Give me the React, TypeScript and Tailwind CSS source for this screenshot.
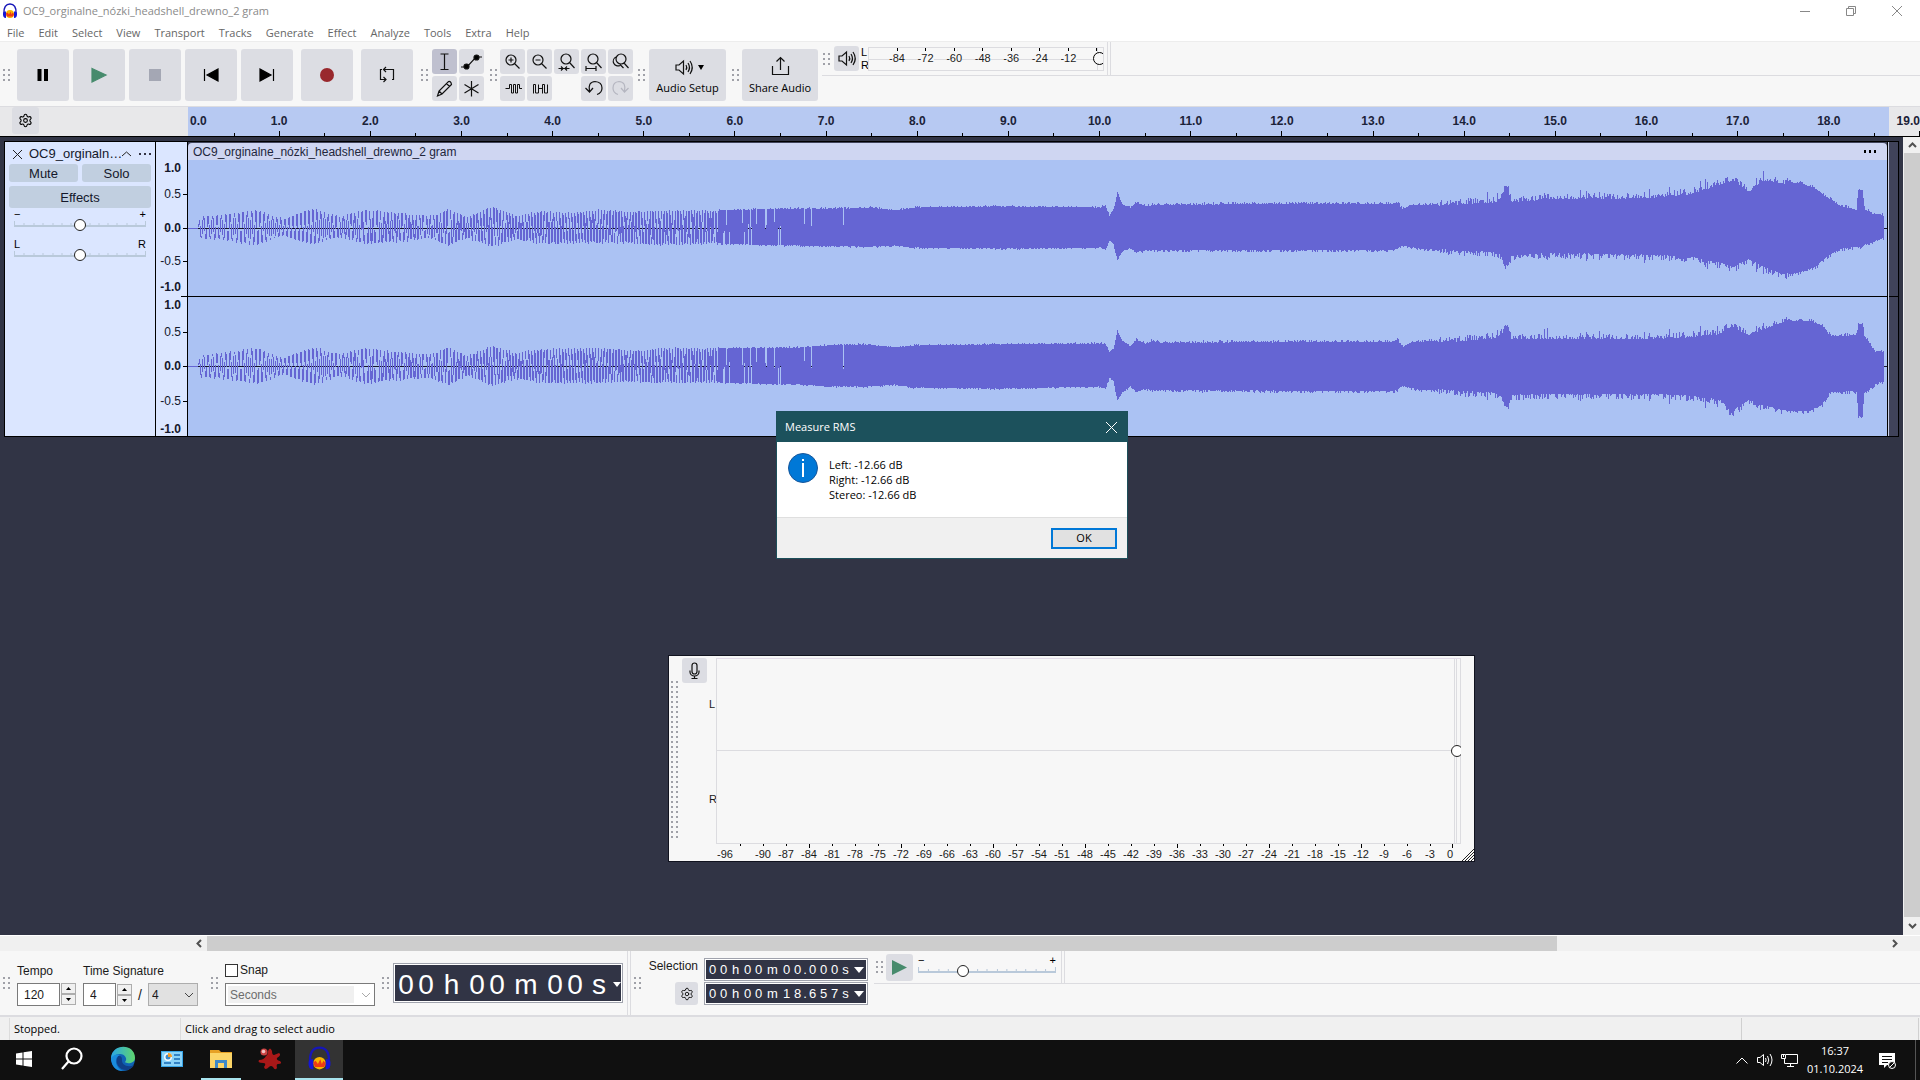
import type { ComponentProps, ReactNode } from "react";
import clsx from "clsx";
import { Settings } from "lucide-react";

const TITLE = "OC9_orginalne_nózki_headshell_drewno_2 gram";

const MENUS = [
  "File", "Edit", "Select", "View", "Transport", "Tracks",
  "Generate", "Effect", "Analyze", "Tools", "Extra", "Help",
];

/** x, top and bottom of the envelope, in pixels of the clip */
type Point = [number, number, number];

const LEFT_CHANNEL: Point[] = [
  [0, 68, 68], [9, 68, 68], [12, 56, 79], [32, 55, 80], [69, 50, 85], [95, 59, 76],
  [125, 48, 85], [150, 57, 77], [177, 50, 84], [212, 53, 82], [242, 56, 78],
  [260, 49, 86], [279, 57, 78], [304, 46, 87], [328, 56, 79], [352, 51, 84],
  [377, 53, 83], [409, 50, 83], [442, 52, 83], [460, 51, 85], [532, 50, 84],
  [562, 49, 85], [612, 48, 86], [667, 48, 87], [682, 47, 87], [707, 50, 86],
  [727, 47, 88], [812, 46, 89], [912, 47, 88], [917, 45, 90], [921, 55, 81],
  [925, 50, 84], [929, 33, 100], [934, 44, 92], [942, 47, 88], [948, 42, 93],
  [957, 45, 91], [972, 44, 91], [1112, 43, 91], [1202, 43, 91], [1209, 42, 90],
  [1214, 48, 86], [1222, 45, 88], [1272, 42, 93], [1307, 40, 94], [1314, 35, 98],
  [1316, 25, 106], [1320, 26, 106], [1322, 40, 98], [1362, 37, 95], [1462, 36, 97],
  [1502, 32, 99], [1532, 23, 105], [1545, 18, 109], [1560, 30, 101], [1572, 20, 107],
  [1582, 19, 112], [1594, 21, 116], [1612, 22, 113], [1627, 28, 108], [1638, 36, 98],
  [1652, 45, 90], [1668, 49, 88], [1670, 29, 88], [1674, 29, 88], [1676, 48, 86],
  [1684, 53, 83], [1695, 55, 79],
];

const RIGHT_CHANNEL: Point[] = [
  [0, 69, 69], [9, 69, 69], [12, 58, 80], [32, 56, 82], [69, 51, 87], [95, 61, 77],
  [125, 50, 88], [150, 57, 79], [177, 51, 87], [212, 55, 83], [242, 57, 81],
  [260, 50, 88], [279, 59, 79], [304, 49, 89], [328, 56, 82], [352, 52, 86],
  [409, 51, 86], [452, 54, 85], [467, 51, 86], [532, 51, 86], [612, 50, 88],
  [639, 48, 90], [677, 47, 90], [707, 50, 88], [727, 48, 91], [812, 47, 92],
  [912, 46, 90], [917, 46, 92], [921, 55, 81], [925, 52, 84], [929, 34, 104],
  [934, 43, 96], [942, 49, 90], [948, 42, 95], [957, 46, 93], [964, 43, 94],
  [972, 45, 94], [1202, 44, 95], [1209, 42, 94], [1214, 49, 89], [1227, 44, 93],
  [1272, 42, 96], [1307, 39, 98], [1314, 34, 103], [1316, 28, 111], [1320, 28, 110],
  [1322, 40, 100], [1362, 40, 99], [1462, 40, 99], [1502, 38, 101], [1532, 35, 105],
  [1543, 27, 117], [1560, 36, 105], [1577, 30, 111], [1594, 23, 115], [1622, 23, 115],
  [1634, 28, 108], [1642, 38, 96], [1668, 37, 95], [1670, 26, 120], [1674, 26, 120],
  [1676, 38, 97], [1687, 54, 88], [1695, 54, 85],
];

function noise(n: number) {
  const s = Math.sin(n * 127.1) * 43758.5453;
  return s - Math.floor(s);
}

/** cycles of the rising sweep that have passed at a column */
function sweep(x: number) {
  const t = Math.max(0, x - 10);
  return 0.22 * t + 0.00015 * t * t;
}

/** one filled bar for each column of the clip */
function wavePath(points: Point[], mid: number, seed: number) {
  let path = "";
  let segment = 0;
  for (let x = 10; x < 1696; x++) {
    while (segment < points.length - 2 && points[segment + 1]![0] <= x) segment++;
    const [x0, top0, bottom0] = points[segment]!;
    const [x1, top1, bottom1] = points[segment + 1]!;
    const t = Math.min(1, (x - x0) / (x1 - x0));
    let top = top0 + (top1 - top0) * t;
    let bottom = bottom0 + (bottom1 - bottom0) * t;

    const rough = x < 950 ? 1.5 : x < 1250 ? 2.5 : x < 1600 ? 6 : 3;
    const a = noise(x + seed);
    const b = noise(x * 3 + seed);
    const spike = x > 1290 && x < 1590 && noise(x * 7) > 0.94 ? 6 : 0;
    top += (a * a - 0.4) * -rough - spike;
    bottom += (b * b - 0.4) * rough + spike * 0.7;

    if (x < 530) {
      /** narrow bars at the low end of the sweep */
      const jitter = x > 150 ? noise(x * 5) * 0.14 : 0;
      let high = -1;
      let low = 1;
      for (let i = 1; i <= 8; i++) {
        const v = Math.sin(2 * Math.PI * (sweep(x + i / 8) + jitter));
        high = Math.max(high, v);
        low = Math.min(low, v);
      }
      top = mid - (mid - top) * high;
      bottom = mid - (bottom - mid) * low;
    } else if (x < 665) {
      /** slits that thin out until the wave is solid */
      const slit = noise(x * 11) < 0.5 * (1 - (x - 530) / 150);
      if (slit && x % 3 !== 0) {
        if (noise(x * 13) > 0.4) top = mid - 6 + 10 * a;
        else bottom = mid + 6 - 10 * b;
      }
    }

    const y0 = Math.round(top);
    const y1 = Math.max(Math.round(bottom), y0 + 1);
    path += `M${x} ${y0}h1V${y1}h-1Z`;
  }
  return path;
}

const leftPath = wavePath(LEFT_CHANNEL, 68, 1);
const rightPath = wavePath(RIGHT_CHANNEL, 69, 2);

function Wave({ path, mid, height, className }: { path: string; mid: number; height: number; className: string }) {
  return (
    <svg
      viewBox={`0 0 1699 ${height}`}
      preserveAspectRatio="none"
      shapeRendering="crispEdges"
      className={clsx("block w-full bg-[#abc2f3]", className)}
    >
      <path d={`M10 ${mid + 0.5}H1700`} stroke="#15162b" />
      <path d={`M0 ${mid + 0.5}H10`} stroke="#6565d3" />
      <path d={path} fill="#6565d3" />
    </svg>
  );
}

function Grip({ rows = 3, className = "" }: { rows?: number; className?: string }) {
  return (
    <svg width="7" height={rows * 5 - 3} className={clsx("shrink-0", className)} fill="#a0a1a8">
      {Array.from({ length: rows }, (_, row) => (
        <g key={row}>
          <rect x="0" y={row * 5} width="2" height="2" />
          <rect x="5" y={row * 5} width="2" height="2" />
        </g>
      ))}
    </svg>
  );
}

function ToolButton({ className = "", ...props }: ComponentProps<"button">) {
  return (
    <button
      className={clsx("flex shrink-0 items-center justify-center rounded-[3px]", className)}
      {...props}
    />
  );
}

function Icon({ size = 25, children, className = "" }: { size?: number; children: ReactNode; className?: string }) {
  return (
    <svg
      width={size}
      height={size}
      viewBox={`0 0 ${size} ${size}`}
      fill="none"
      stroke="#111"
      strokeWidth="1.2"
      className={clsx("shrink-0", className)}
    >
      {children}
    </svg>
  );
}

function SpeakerIcon() {
  return (
    <Icon>
      <path d="M5 10H8L12.500 6V19L8 15H5Z" />
      <path d="M15 10Q16.500 12.500 15 15M17 8Q20 12.500 17 17M19 6Q23.500 12.500 19 19" />
    </Icon>
  );
}

const TRANSPORT = [
  { label: "Pause", icon: <path d="M20.500 20H24.500V32H20.500ZM27 20H31V32H27Z" fill="#000" stroke="none" /> },
  { label: "Play", icon: <path d="M19 19.500 33 26 19 33Z" fill="#478b6d" stroke="#478b6d" /> },
  { label: "Stop", icon: <path d="M20 20H32V32H20Z" fill="#a4a7b4" stroke="none" /> },
  { label: "Skip to Start", icon: <path d="M19.500 20V32M33 20 22 26 33 32Z" fill="#000" stroke="#000" /> },
  { label: "Skip to End", icon: <path d="M32.500 20V32M19 20 30 26 19 32Z" fill="#000" stroke="#000" /> },
];

const TOOLS = [
  {
    label: "Selection Tool",
    icon: <path d="M8.500 5H16.500M8.500 20.500H16.500M12.500 5V20.500" />,
  },
  {
    label: "Envelope Tool",
    icon: (
      <>
        <path d="M2 18H8L17 8H23" />
        <circle cx="7.500" cy="17.500" r="2.500" fill="#000" />
        <circle cx="17.500" cy="8.500" r="2.500" fill="#000" />
      </>
    ),
  },
  {
    label: "Draw Tool",
    icon: <path d="M5.500 20 7 15 16.500 5.500Q19 5 19.500 8.500L10 18ZM7 15 10 18M14.500 7.500 17.500 10.500" />,
  },
  {
    label: "Multi-Tool",
    icon: <path d="M12.500 5V20.500M5.500 8.500 19.500 17M19.500 8.500 5.500 17" />,
  },
];

const EDITING = [
  {
    label: "Zoom In",
    icon: <path d="M16 11A5 5 0 1 1 6 11A5 5 0 1 1 16 11M14.500 14.500 19.500 19.500M11 8.500V13.500M8.500 11H13.500" />,
  },
  {
    label: "Zoom Out",
    icon: <path d="M16 11A5 5 0 1 1 6 11A5 5 0 1 1 16 11M14.500 14.500 19.500 19.500M8.500 11H13.500" />,
  },
  {
    label: "Fit Selection",
    icon: (
      <path d="M17 10A5 5 0 1 1 7 10A5 5 0 1 1 17 10M15.500 13.500 20.500 19M4.500 19.500H15.500M7 17.500 9 19.500 7 21.500M13 17.500 11 19.500 13 21.500" />
    ),
  },
  {
    label: "Fit Project",
    icon: <path d="M17 10A5 5 0 1 1 7 10A5 5 0 1 1 17 10M15.500 13.500 20.500 19M5 19.500H15M5 17V22M15 17V22" />,
  },
  {
    label: "Zoom Toggle",
    icon: <path d="M18 10A5 5 0 1 1 8 10A5 5 0 1 1 18 10M16 14 20.500 19M8 8A4.500 4.500 0 1 0 12 16.500M12 15.500 15.500 19" />,
  },
  {
    label: "Trim Audio",
    icon: (
      <path
        d="M5.500 12.500H9.500V8.500H11.500V17H13.500V8.500H15.500V17H17.500V8.500H19.500V12.500H22"
        strokeWidth="1"
      />
    ),
  },
  {
    label: "Silence Audio",
    icon: <path d="M6.500 17.500V8.500H8.500V17H11.500V8.500M11.500 12.500H15.500M15.500 17.500V8.500H17.500V17H20.500V8.500" strokeWidth="1" />,
  },
  null,
  {
    label: "Undo",
    icon: <path d="M8.500 15.500Q6.500 6 14 5.500Q21 6 21 12Q21 17 16 18.500M4.500 12 8.500 16 12 12" />,
  },
  {
    label: "Redo",
    icon: <path d="M16.500 15.500Q18.500 6 11 5.500Q5 6 5 12Q5 17 10 18.500M20.500 12 16.500 16 13 12" stroke="#b5b6c0" />,
  },
];

function Headphones({ className = "" }: { className?: string }) {
  return (
    <svg viewBox="0 0 32 32" className={className}>
      <ellipse cx="16" cy="22" rx="8" ry="8" fill="#f7b500" />
      <path d="M8 21 11 19 14 23 17 17 19 23 21 19 24 22 22 27H10Z" fill="#ee3a16" />
      <path d="M4 21C3 8 8 2 16 2S29 8 28 21" fill="none" stroke="#1616b8" strokeWidth="3" />
      <path d="M2 20Q3 16 8 17V30Q1 30 2 20ZM30 20Q29 16 24 17V30Q31 30 30 20Z" fill="#1616d8" />
    </svg>
  );
}

function TitleBar() {
  return (
    <header className="bg-white">
      <div className="flex h-[22px] items-center pl-[2px] text-[11px] text-[#8a8a8a]">
        <Headphones className="mr-[5px] size-4" />
        <span className="grow pt-px">{TITLE}</span>
        <button aria-label="Minimize" className="w-[46px]">
          <svg width="10" height="10" className="mx-auto" stroke="#888"><path d="M0 5.500H10" /></svg>
        </button>
        <button aria-label="Restore" className="w-[46px]">
          <svg width="10" height="10" className="mx-auto" stroke="#888" fill="none">
            <path d="M.5 2.500H7.500V9.500H.5ZM2.500 2.500V.5H9.500V7.500H7.500" />
          </svg>
        </button>
        <button aria-label="Close" className="w-[46px]">
          <svg width="10" height="10" className="mx-auto" stroke="#888"><path d="M0 0 10 10M10 0 0 10" /></svg>
        </button>
      </div>
      <nav className="flex h-5 items-end gap-[14px] border-b border-[#ededed] pl-[7px] text-[11px] leading-[17px] text-[#666]">
        {MENUS.map((menu) => (
          <button key={menu}>{menu}</button>
        ))}
      </nav>
    </header>
  );
}

function PlaybackMeter() {
  const marks = ["-84", "-72", "-60", "-48", "-36", "-24", "-12", "0"];
  return (
    <div className="relative flex h-6 w-[236px] overflow-hidden border border-[#dcdce0] text-[11px] leading-[14px] text-[#222]">
      <div className="absolute inset-x-0 top-[11px] h-px bg-[#dcdce0]" />
      <div className="relative mr-[6px] ml-7 flex grow justify-between">
        {marks.map((mark) => (
          <div key={mark} className="flex w-0 flex-col items-center">
            <span className="h-[3px] w-px shrink-0 bg-black" />
            <span className="bg-[#f7f7f7]">{mark}</span>
          </div>
        ))}
      </div>
      <div className="absolute inset-y-0 right-[5px] w-px bg-[#dcdce0]" />
      <input
        type="range"
        aria-label="Playback level"
        defaultValue={100}
        className="
          absolute top-1 left-0 h-[14px] w-[237px] appearance-none bg-transparent
          [&::-webkit-slider-thumb]:size-[13px] [&::-webkit-slider-thumb]:appearance-none
          [&::-webkit-slider-thumb]:rounded-full [&::-webkit-slider-thumb]:border
          [&::-webkit-slider-thumb]:border-black [&::-webkit-slider-thumb]:bg-[#f7f7f7]
        "
      />
    </div>
  );
}

function Toolbars() {
  return (
    <div className="flex h-[65px] items-stretch border-b border-[#dcdce0] bg-[#f7f7f7]">
      <div className="flex items-center pt-[2px]">
        <Grip className="mr-[7px] ml-[3px]" />
        <div className="flex gap-1">
          {TRANSPORT.map(({ label, icon }) => (
            <ToolButton key={label} aria-label={label} className="size-[52px] bg-[#dcdde3]">
              <Icon size={52}>{icon}</Icon>
            </ToolButton>
          ))}
        </div>
        <ToolButton aria-label="Record" className="ml-2 size-[52px] bg-[#dcdde3]">
          <Icon size={52}><circle cx="26" cy="26" r="7" fill="#99282d" stroke="none" /></Icon>
        </ToolButton>
        <ToolButton aria-label="Loop" className="ml-2 size-[52px] bg-[#dcdde3]">
          <Icon size={52}>
            <path d="M21 20.500H19.500V30.500H25M22.500 20.500H32.500V30.500H31M25 18 22.500 20.500 25 23M22.500 28 25 30.500 22.500 33" />
          </Icon>
        </ToolButton>
        <Grip className="mr-1 ml-2" />
        <div className="grid grid-cols-2 gap-[2px]">
          {TOOLS.map(({ label, icon }, index) => (
            <ToolButton
              key={label}
              aria-label={label}
              className={clsx("size-[25px]", index === 0 ? "bg-[#bfc0cf]" : "bg-[#dcdde3]")}
            >
              <Icon>{icon}</Icon>
            </ToolButton>
          ))}
        </div>
        <Grip className="mr-[3px] ml-[6px]" />
        <div className="grid grid-cols-5 gap-[2px]">
          {EDITING.map((tool, index) =>
            tool ? (
              <ToolButton key={index} aria-label={tool.label} className="size-[25px] bg-[#dcdde3]">
                <Icon>{tool.icon}</Icon>
              </ToolButton>
            ) : (
              <span key={index} />
            ),
          )}
        </div>
        <Grip className="mr-1 ml-[5px]" />
        <ToolButton className="h-[52px] w-[77px] flex-col bg-[#dcdde3] text-[11px] leading-[16px]">
          <span className="flex items-center gap-[2px]">
            <SpeakerIcon />
            <svg width="6" height="6"><path d="M0 1H6L3 6Z" /></svg>
          </span>
          Audio Setup
        </ToolButton>
        <Grip className="mr-[3px] ml-[6px]" />
        <ToolButton className="h-[52px] w-[76px] flex-col bg-[#dcdde3] text-[11px] leading-[16px]">
          <Icon>
            <path d="M4.500 11V19.500H20.500V11M12.500 15V2.500M8.500 6.500 12.500 2.500 16.500 6.500" />
          </Icon>
          Share Audio
        </ToolButton>
      </div>
      <div className="ml-1 grow">
        <div className="flex h-[34px] items-center border-b border-[#dcdce0] font-[Liberation_Sans,sans-serif]">
          <Grip className="mr-1 ml-[1px]" />
          <ToolButton aria-label="Playback meter" className="size-[25px] bg-[#dcdde3]">
            <SpeakerIcon />
          </ToolButton>
          <div className="w-[9px] pl-[2px] text-[11px] leading-[13px]">
            <div>L</div>
            <div>R</div>
          </div>
          <PlaybackMeter />
          <div className="ml-[3px] h-full w-[4px] border-x border-[#dcdce0]" />
        </div>
      </div>
    </div>
  );
}

function Timeline() {
  return (
    <div className="flex h-[30px] border-b border-black bg-[#e8e8ea]">
      <div className="w-[188px] shrink-0 pl-3">
        <ToolButton aria-label="Timeline options" className="h-[27px] w-[27px] bg-[#dcdde3]">
          <Settings size={15} strokeWidth={1.7} />
        </ToolButton>
      </div>
      <div
        className="
          relative flex grow bg-linear-to-r from-[#b7c9f2] from-[98.2%] to-[#e8e8ea] to-[98.2%]
          font-[Liberation_Sans,sans-serif] text-[12px] font-bold text-[#1b2238]
        "
      >
        {Array.from({ length: 19 }, (_, second) => (
          <div key={second} className="flex flex-1 items-end">
            <div className={clsx("flex h-full w-0 flex-col whitespace-nowrap", second ? "items-center" : "items-start pl-[2px]")}>
              <span className="grow pt-[5px]">{second}.0</span>
              {second > 0 && <span className="h-[5px] w-px bg-black" />}
            </div>
            <div className="mx-auto h-[3px] w-px bg-black" />
          </div>
        ))}
        <div className="flex h-full w-0 flex-col items-end whitespace-nowrap">
          <span className="grow pt-[5px]">19.0</span>
          <span className="h-[5px] w-px bg-black" />
        </div>
      </div>
    </div>
  );
}

const SLIDER = `
  h-[14px] appearance-none bg-transparent
  [&::-webkit-slider-thumb]:size-3 [&::-webkit-slider-thumb]:appearance-none
  [&::-webkit-slider-thumb]:rounded-full [&::-webkit-slider-thumb]:border
  [&::-webkit-slider-thumb]:border-[#222] [&::-webkit-slider-thumb]:bg-white
`;

function Slider({ label, value, low, high, className = "" }: { label: string; value: number; low: string; high: string; className?: string }) {
  return (
    <label className={clsx("block font-[Liberation_Sans,sans-serif] text-[11px] text-black", className)}>
      <span className="flex h-2 items-center justify-between leading-[8px]">
        <span>{low}</span>
        <span>{high}</span>
      </span>
      <span className="relative flex h-[14px]">
        <svg className="absolute inset-0" width="100%" height="14" viewBox="0 0 132 14" preserveAspectRatio="none" stroke="#b9c9da">
          <path d="M0 8H132" strokeWidth="2" />
          <path d="M.5 3V7M10 5V7M20 5V7M29 5V7M39 5V7M48 5V7M57 5V7M66 5V7M76 5V7M85 5V7M94 5V7M103 5V7M113 5V7M122 5V7M131.500 3V7" />
        </svg>
        <input type="range" aria-label={label} defaultValue={value} className={clsx(SLIDER, "relative w-full")} />
      </span>
    </label>
  );
}

function TrackPanel() {
  return (
    <div className="w-[151px] shrink-0 border-r border-black bg-[#dbe6ff] px-1 pt-[2px] font-[Liberation_Sans,sans-serif] text-[13px] text-[#14182b]">
      <div className="flex h-5 items-center">
        <button aria-label="Close track" className="mr-[7px] ml-1">
          <svg width="9" height="9" stroke="#222"><path d="M0 0 9 9M9 0 0 9" /></svg>
        </button>
        <span className="grow">OC9_orginaln…</span>
        <button aria-label="Collapse" className="mr-2">
          <svg width="9" height="6" stroke="#222" fill="none"><path d="M0 5 4.500 1 9 5" /></svg>
        </button>
        <button aria-label="Track menu" className="mr-1">
          <svg width="12" height="2" fill="#334"><path d="M0 0H2V2H0ZM5 0H7V2H5ZM10 0H12V2H10Z" /></svg>
        </button>
      </div>
      <div className="flex gap-1">
        <ToolButton className="h-[18px] flex-1 bg-[#c1cfe0] pt-px">Mute</ToolButton>
        <ToolButton className="h-[18px] flex-1 bg-[#c1cfe0] pt-px">Solo</ToolButton>
      </div>
      <ToolButton className="mt-1 h-[22px] w-full bg-[#c1cfe0] pt-px">Effects</ToolButton>
      <Slider label="Gain" value={50} low="−" high="+" className="mt-[2px] px-[5px]" />
      <Slider label="Pan" value={50} low="L" high="R" className="mt-2 px-[5px]" />
    </div>
  );
}

function ScaleMark({ value, className }: { value: string; className: string }) {
  const bold = value !== "0.5" && value !== "-0.5";
  return (
    <div className={clsx("flex items-center justify-end gap-[2px]", bold && "font-bold", className)}>
      {value}
      <span className={clsx("h-px w-1", !value.endsWith("1.0") && "bg-black")} />
    </div>
  );
}

function AmplitudeScale() {
  return (
    <div className="w-8 shrink-0 border-r border-black bg-[#dbe6ff] pt-[18px] font-[Liberation_Sans,sans-serif] text-[12px] leading-[14px] text-[#14182b]">
      <ScaleMark value="1.0" className="h-4" />
      <ScaleMark value="0.5" className="h-9" />
      <ScaleMark value="0.0" className="h-8" />
      <ScaleMark value="-0.5" className="h-[34px]" />
      <ScaleMark value="-1.0" className="h-[18px]" />
      <div className="ml-auto h-px w-[6px] bg-black" />
      <ScaleMark value="1.0" className="h-4" />
      <ScaleMark value="0.5" className="h-[38px]" />
      <ScaleMark value="0.0" className="h-[30px]" />
      <ScaleMark value="-0.5" className="h-10" />
      <ScaleMark value="-1.0" className="h-[15px]" />
    </div>
  );
}

function Track() {
  return (
    <div className="mt-1 mr-1 ml-1 flex border border-black bg-[#40435a]">
      <TrackPanel />
      <AmplitudeScale />
      <div className="grow border-r border-black pt-px">
        <div className="flex h-[17px] items-center justify-between rounded-t-[4px] bg-[#cfd6f2] px-[5px] font-[Liberation_Sans,sans-serif] text-[12px] text-[#22263c]">
          <span>{TITLE}</span>
          <button aria-label="Clip menu" className="mr-1">
            <svg width="16" height="3"><path d="M2 0H4V3H2ZM7 0H9V3H7ZM12 0H14V3H12Z" /></svg>
          </button>
        </div>
        <Wave path={leftPath} mid={68} height={136} className="h-[136px]" />
        <div className="h-px bg-black" />
        <Wave path={rightPath} mid={69} height={139} className="h-[139px]" />
      </div>
      <div className="flex w-[10px] shrink-0 flex-col border-l border-[#c9cfe6]">
        <div className="h-[155px] border-b border-black" />
      </div>
    </div>
  );
}

function RecordMeter() {
  return (
    <section className="absolute top-[518px] left-[668px] flex h-[207px] w-[807px] border border-[#11131f] bg-[#f7f7f7] font-[Liberation_Sans,sans-serif] text-[11px] text-[#1a1a1a]">
      <Grip rows={32} className="mt-[25px] mr-[4px] ml-[2px]" />
      <ToolButton aria-label="Record meter" className="mt-[2px] size-[25px] bg-[#dcdde3]">
        <Icon>
          <path d="M10 7.500A2.500 2.500 0 0 1 15 7.500V13.500A2.500 2.500 0 0 1 10 13.500ZM8 12.500V14A4.500 4 0 0 0 17 14V12.500M12.500 18V20M9.500 20.500H15.500" />
        </Icon>
      </ToolButton>
      <div className="flex h-[190px] w-[9px] flex-col justify-around pl-[2px] leading-[14px]">
        <span>L</span>
        <span>R</span>
      </div>
      <div className="mr-[13px] grow pt-[2px]">
        <div className="relative flex h-[186px] flex-col border border-[#dcdce0] border-t-[#e3dbe8]">
          <div className="h-[92px] border-b border-[#dcdce0]" />
          <div className="absolute inset-y-0 right-[3px] w-[3px] border-x border-[#dcdce0]" />
          <div className="absolute top-[85px] -right-px w-[11px] overflow-hidden">
            <input type="range" aria-label="Recording level" defaultValue={100} className={clsx(SLIDER, "block w-[13px]")} />
          </div>
        </div>
        <div className="mr-2 -mt-px ml-px flex justify-between leading-[13px]">
          {Array.from({ length: 33 }, (_, index) => {
            const level = index * 3 - 96;
            return (
              <div
                key={level}
                className={clsx(
                  "flex w-0 flex-col",
                  level === -96 ? "items-start" : level === 0 ? "items-end" : "items-center",
                )}
              >
                <span className="h-[5px] shrink-0">
                  {level !== -96 && (
                    <span className={clsx("block w-px bg-black", level % 12 ? "h-[3px]" : "h-[5px]")} />
                  )}
                </span>
                {level !== -93 && <span>{level}</span>}
              </div>
            );
          })}
        </div>
      </div>
      <svg className="absolute right-0 bottom-0" width="12" height="12" stroke="#222">
        <path d="M0 12 12 0M3 12 12 3M6 12 12 6M9 12 12 9" />
      </svg>
    </section>
  );
}

function Dialog() {
  return (
    <section
      role="dialog"
      aria-labelledby="dialog-title"
      className="absolute top-[274px] left-[776px] w-[352px] border border-[#1c4f5a] bg-white text-[11px]"
    >
      <div className="flex h-[30px] items-center justify-between bg-[#1c515c] pr-[10px] pl-2 text-white">
        <h2 id="dialog-title">Measure RMS</h2>
        <button aria-label="Close">
          <svg width="11" height="11" stroke="#fff"><path d="M0 0 11 11M11 0 0 11" /></svg>
        </button>
      </div>
      <div className="flex h-[75px] gap-[11px] pt-[11px] pl-[11px]">
        <svg width="30" height="30">
          <circle cx="15" cy="15" r="14.500" fill="#0078d7" stroke="#17569a" />
          <path d="M14 6H16V8H14ZM14 10H16V24H14Z" fill="#fff" />
        </svg>
        <p className="pt-[4px] leading-[15px]">
          Left: -12.66 dB
          <br />
          Right: -12.66 dB
          <br />
          Stereo: -12.66 dB
        </p>
      </div>
      <div className="flex h-[41px] items-center justify-end border-t border-[#dfdfdf] bg-[#f0f0f0] pr-[10px]">
        <button className="h-[21px] w-[66px] border-2 border-[#0078d7] bg-[#e1e1e1] leading-[16px]">OK</button>
      </div>
    </section>
  );
}

function Workspace() {
  return (
    <main className="relative flex min-h-0 grow bg-[#313445]">
      <div className="min-w-0 grow">
        <Track />
      </div>
      <div className="flex w-[17px] shrink-0 flex-col bg-[#f0f0f0] pl-px">
        <button aria-label="Scroll up" className="flex h-4 items-center justify-center">
          <svg width="9" height="6" stroke="#505050" strokeWidth="2" fill="none"><path d="M1 5 4.500 1.500 8 5" /></svg>
        </button>
        <div className="grow bg-[#cdcdcd]" />
        <button aria-label="Scroll down" className="flex h-[18px] items-center justify-center">
          <svg width="9" height="6" stroke="#505050" strokeWidth="2" fill="none"><path d="M1 1 4.500 4.500 8 1" /></svg>
        </button>
      </div>
      <RecordMeter />
      <Dialog />
    </main>
  );
}

function HorizontalScroll() {
  return (
    <div className="flex h-4 border-t border-white bg-[#f0f0f0] pr-[17px] pl-[190px]">
      <button aria-label="Scroll left" className="flex w-[17px] items-center justify-center">
        <svg width="6" height="9" stroke="#505050" strokeWidth="2" fill="none"><path d="M5 1 1.500 4.500 5 8" /></svg>
      </button>
      <div className="grow">
        <div className="h-full w-[80.4%] bg-[#cdcdcd]" />
      </div>
      <button aria-label="Scroll right" className="flex w-[17px] items-center justify-center">
        <svg width="6" height="9" stroke="#505050" strokeWidth="2" fill="none"><path d="M1 1 4.500 4.500 1 8" /></svg>
      </button>
    </div>
  );
}

function Spin({ label }: { label: string }) {
  return (
    <div className="ml-px flex w-[15px] flex-col">
      <button aria-label={`${label} up`} className="flex h-[11px] items-center justify-center border border-[#adadad] bg-[#f0f0f0]">
        <svg width="5" height="3"><path d="M0 3 2.500 0 5 3Z" /></svg>
      </button>
      <button aria-label={`${label} down`} className="flex h-[11px] items-center justify-center border border-[#adadad] bg-[#f0f0f0]">
        <svg width="5" height="3"><path d="M0 0H5L2.500 3Z" /></svg>
      </button>
    </div>
  );
}

function Chevron({ className }: { className: string }) {
  return (
    <svg width="8" height="5" fill="none" className={clsx("pointer-events-none absolute top-[10px] right-[5px]", className)}>
      <path d="M0 0 4 4 8 0" />
    </svg>
  );
}

/** each digit and unit of a time box stands in a cell of its own */
function TimeCells({ value, digit, units }: { value: string; digit: string; units: Record<string, string> }) {
  return (
    <span className="flex">
      {[...value].map((char, index) => (
        <span key={index} className={clsx("text-center", units[char] ?? digit)}>
          {char}
        </span>
      ))}
    </span>
  );
}

function TimeBox({ value }: { value: string }) {
  return (
    <div className="flex h-[23px] w-[164px] items-center border border-[#a0a3ad] bg-[#313445] pr-[3px] pl-[2px] text-[13px] text-white outline-1 -outline-offset-2 outline-white">
      <TimeCells value={value} digit="w-[11px]" units={{ h: "w-[13px]", m: "w-[17px]", ".": "w-1" }} />
      <button aria-label="Time format" className="ml-auto">
        <svg width="10" height="6" fill="#fff"><path d="M0 0H10L5 6Z" /></svg>
      </button>
    </div>
  );
}

function BottomToolbars() {
  return (
    <div className="flex h-[66px] border-b-2 border-[#dcdce0] bg-[#f7f7f7] font-[Liberation_Sans,sans-serif] text-[12px] leading-[16px] text-[#1a1a1a]">
      <Grip className="mr-[7px] ml-[3px] self-center" />
      <div className="pt-3">
        <label htmlFor="tempo" className="mb-1 block">Tempo</label>
        <div className="flex">
          <input id="tempo" defaultValue="120" className="h-[23px] w-[43px] border border-[#7a7a7a] bg-white pl-[6px]" />
          <Spin label="Tempo" />
        </div>
      </div>
      <div className="ml-[7px] pt-3">
        <label htmlFor="beats" className="mb-1 block">Time Signature</label>
        <div className="flex items-center">
          <input id="beats" defaultValue="4" className="h-[23px] w-[33px] border border-[#7a7a7a] bg-white pl-[6px]" />
          <Spin label="Beats" />
          <span className="w-4 text-center text-[14px]">/</span>
          <div className="relative">
            <select aria-label="Beat unit" className="block h-[23px] w-[50px] appearance-none border border-[#adadad] bg-[#e1e1e1] pl-[3px]">
              <option>4</option>
            </select>
            <Chevron className="stroke-[#444]" />
          </div>
        </div>
      </div>
      <Grip className="mr-[7px] ml-[13px] self-center" />
      <div className="pt-[11px]">
        <label className="mb-[5px] flex items-center gap-[2px]">
          <input type="checkbox" className="size-[13px] appearance-none border border-[#333] bg-white" />
          Snap
        </label>
        <div className="relative">
          <select
            aria-label="Snap to"
            disabled
            className="block h-[23px] w-[150px] appearance-none border border-[#7a7a7a] bg-linear-to-r from-[#f0f0f0] from-[128px] to-white to-[128px] pl-1 text-[#6d6d6d] opacity-100 shadow-[inset_0_0_0_2px_white]"
          >
            <option>Seconds</option>
          </select>
          <Chevron className="stroke-[#aaa]" />
        </div>
      </div>
      <Grip className="mr-1 ml-[7px] self-center" />
      <div className="mt-3 flex h-[40px] w-[230px] items-center border border-[#a0a3ad] bg-[#313445] pt-1 pl-[2px] text-[28px] leading-[32px] text-white outline-1 -outline-offset-2 outline-white">
        <TimeCells value="00h00m00s" digit="w-5" units={{ h: "w-[31px]", m: "w-[38px]", s: "w-7" }} />
        <button aria-label="Time format">
          <svg width="8" height="6" fill="#fff"><path d="M0 0H8L4 5Z" /></svg>
        </button>
      </div>
      <div className="ml-1 w-[4px] border-x border-[#dcdce0]" />
      <Grip className="mr-[6px] ml-[3px] self-center" />
      <div className="flex w-[51px] flex-col items-end justify-between pt-[7px] pb-[10px]">
        <span>Selection</span>
        <ToolButton aria-label="Selection options" className="size-[23px] bg-[#dcdde3]">
          <Settings size={14} strokeWidth={1.7} />
        </ToolButton>
      </div>
      <div className="mt-[7px] ml-[6px] flex flex-col gap-px">
        <TimeBox value="00h00m00.000s" />
        <TimeBox value="00h00m18.657s" />
      </div>
      <div className="ml-[6px] grow">
        <div className="flex h-[33px] items-center border-b border-[#dcdce0]">
          <Grip className="mr-[3px] ml-[2px]" />
          <ToolButton aria-label="Play at speed" className="size-[27px] bg-[#dcdde3]">
            <svg width="15" height="15" fill="#478b6d"><path d="M0 0 15 7.500 0 15Z" /></svg>
          </ToolButton>
          <Slider label="Playback speed" value={31} low="−" high="+" className="ml-[5px] w-[138px]" />
          <div className="ml-[5px] h-full w-[4px] border-x border-[#dcdce0]" />
        </div>
      </div>
    </div>
  );
}

function StatusBar() {
  return (
    <footer className="flex h-[23px] items-end bg-[#f0f0f0] pr-px pl-[9px] text-[11px] leading-[22px]">
      <span className="w-[171px] border-l border-[#dcdcdc] pl-1">Stopped.</span>
      <span className="grow border-l border-[#dcdcdc] pl-1">Click and drag to select audio</span>
      <span className="h-[22px] w-[178px] border-x border-[#d0d0d0]" />
    </footer>
  );
}

const APPS = [
  {
    label: "Start",
    icon: <path d="M7 10.500 13.500 9.500V15.500H7ZM14.500 9.300 23 8V15.500H14.500ZM7 16.500H13.500V22.500L7 21.500ZM14.500 16.500H23V24L14.500 22.700Z" fill="#fff" />,
  },
  {
    label: "Search",
    icon: <path d="M23.500 13A7.500 7.500 0 1 1 8.500 13A7.500 7.500 0 1 1 23.500 13M10.500 18.500 4 26" stroke="#fff" strokeWidth="2.200" fill="none" />,
  },
  {
    label: "Edge",
    icon: (
      <>
        <defs>
          <linearGradient id="edge-top" x1="0" x2="1">
            <stop offset="0" stopColor="#2aa6e8" />
            <stop offset="1" stopColor="#5fd56b" />
          </linearGradient>
        </defs>
        <circle cx="16" cy="16" r="12" fill="#0f62b4" />
        <path d="M4 15C5 0 28 0 28 15C28 21 19 21 18 19C21 16 18 11 13 11C8 11 5 14 4 19Z" fill="url(#edge-top)" />
        <path d="M11 13C7 21 13 28 21 27C25 25 26 24 27 22C21 25 14 22 15 16C15 14 13 12 11 13Z" fill="#103f87" />
        <path d="M4 15Q8 10 13 12Q8 14 9 20Q11 26 16 28Q5 28 4 15Z" fill="#1a8cdd" />
      </>
    ),
  },
  {
    label: "Control Panel",
    icon: (
      <>
        <path d="M5 8H27V24H5Z" fill="#38a5e8" />
        <path d="M6 9H26V23H6Z" fill="#8ad3f9" />
        <circle cx="12" cy="14" r="4" fill="#f5f9fc" />
        <circle cx="12" cy="14" r="2.500" fill="#3b87c8" />
        <path d="M12 14V10A4 4 0 0 1 16 14Z" fill="#f39b26" />
        <path d="M8 20H15M18 12H24M18 16H24M18 20H24" stroke="#1769b5" strokeWidth="1.500" />
      </>
    ),
  },
  {
    label: "Explorer",
    running: true,
    icon: (
      <>
        <path d="M5 7H14L16 9H27V12H5Z" fill="#e6a125" />
        <path d="M5 10H27V25H5Z" fill="#fbd568" />
        <path d="M10 25V17H22V25H19V20H13V25Z" fill="#3d89c9" />
      </>
    ),
  },
  {
    label: "IrfanView",
    icon: (
      <>
        <path d="M12 13Q14 12 14 8Q16 3 18 8Q18 12 20 12L25 10Q28 12 23 15Q22 17 26 18Q29 21 24 21Q22 21 23 25Q21 28 19 24Q17 22 15 24Q11 28 10 24Q13 20 9 20Q3 20 5 17Q10 17 12 13Z" fill="#a81818" />
        <circle cx="10" cy="9" r="3.500" fill="#c44" />
        <circle cx="9.500" cy="8.500" r="1.800" fill="#f2c5c5" />
      </>
    ),
  },
];

function Taskbar() {
  return (
    <div className="flex h-10 items-stretch bg-[#101010] text-white">
      {APPS.map(({ label, icon, running }) => (
        <button key={label} aria-label={label} className="flex w-[49px] flex-col items-center justify-between pt-[3px]">
          <svg width="32" height="32">{icon}</svg>
          <span className={clsx("h-[2px] w-10", running && "bg-[#a8e4ee]")} />
        </button>
      ))}
      <button aria-label="Audacity" className="ml-px flex w-12 flex-col items-center justify-between bg-[#333] pt-[6px]">
        <Headphones className="size-[25px]" />
        <span className="h-[2px] w-full bg-[#a8e4ee]" />
      </button>
      <div className="ml-auto flex items-center">
        <button aria-label="Show hidden icons" className="mr-[9px]">
          <svg width="12" height="7" stroke="#fff" fill="none"><path d="M.5 6.500 6 1 11.500 6.500" /></svg>
        </button>
        <button aria-label="Volume" className="mr-[7px]">
          <svg width="17" height="16" stroke="#fff" fill="none">
            <path d="M.5 5.500H3L6.500 2.500V13.500L3 10.500H.5ZM8.500 6Q9.700 8 8.500 10M10.500 4Q13 8 10.500 12M13 2Q17 8 13 14" />
          </svg>
        </button>
        <button aria-label="Network" className="mr-[9px]">
          <svg width="17" height="16" stroke="#fff" fill="none">
            <path d="M5 2.500H16.500V11.500H3.500V6M9.500 11.500V14M6 14.500H13M.5 2.500H4.500V6.500H.5ZM2.500 3V5" />
          </svg>
        </button>
        <div className="w-[56px] text-center text-[11px] leading-[18px]">
          <div>16:37</div>
          <div>01.10.2024</div>
        </div>
        <button aria-label="Notifications" className="mr-[19px] ml-[16px]">
          <svg width="17" height="17">
            <path d="M0 1H16V13H8L5 16V13H0Z" fill="#fff" />
            <path d="M3 4.500H13M3 7.500H13M3 10.500H9" stroke="#101010" />
            <circle cx="13" cy="13" r="3.500" fill="#101010" stroke="#fff" />
            <path d="M10.500 15.500 15.500 10.500" stroke="#fff" />
          </svg>
        </button>
        <div className="mr-1 h-full w-px bg-[#555]" />
      </div>
    </div>
  );
}

export default function App() {
  return (
    <div className="flex h-screen flex-col overflow-hidden bg-[#f7f7f7] font-[Open_Sans,sans-serif] text-black">
      <TitleBar />
      <Toolbars />
      <Timeline />
      <Workspace />
      <HorizontalScroll />
      <BottomToolbars />
      <StatusBar />
      <Taskbar />
    </div>
  );
}
